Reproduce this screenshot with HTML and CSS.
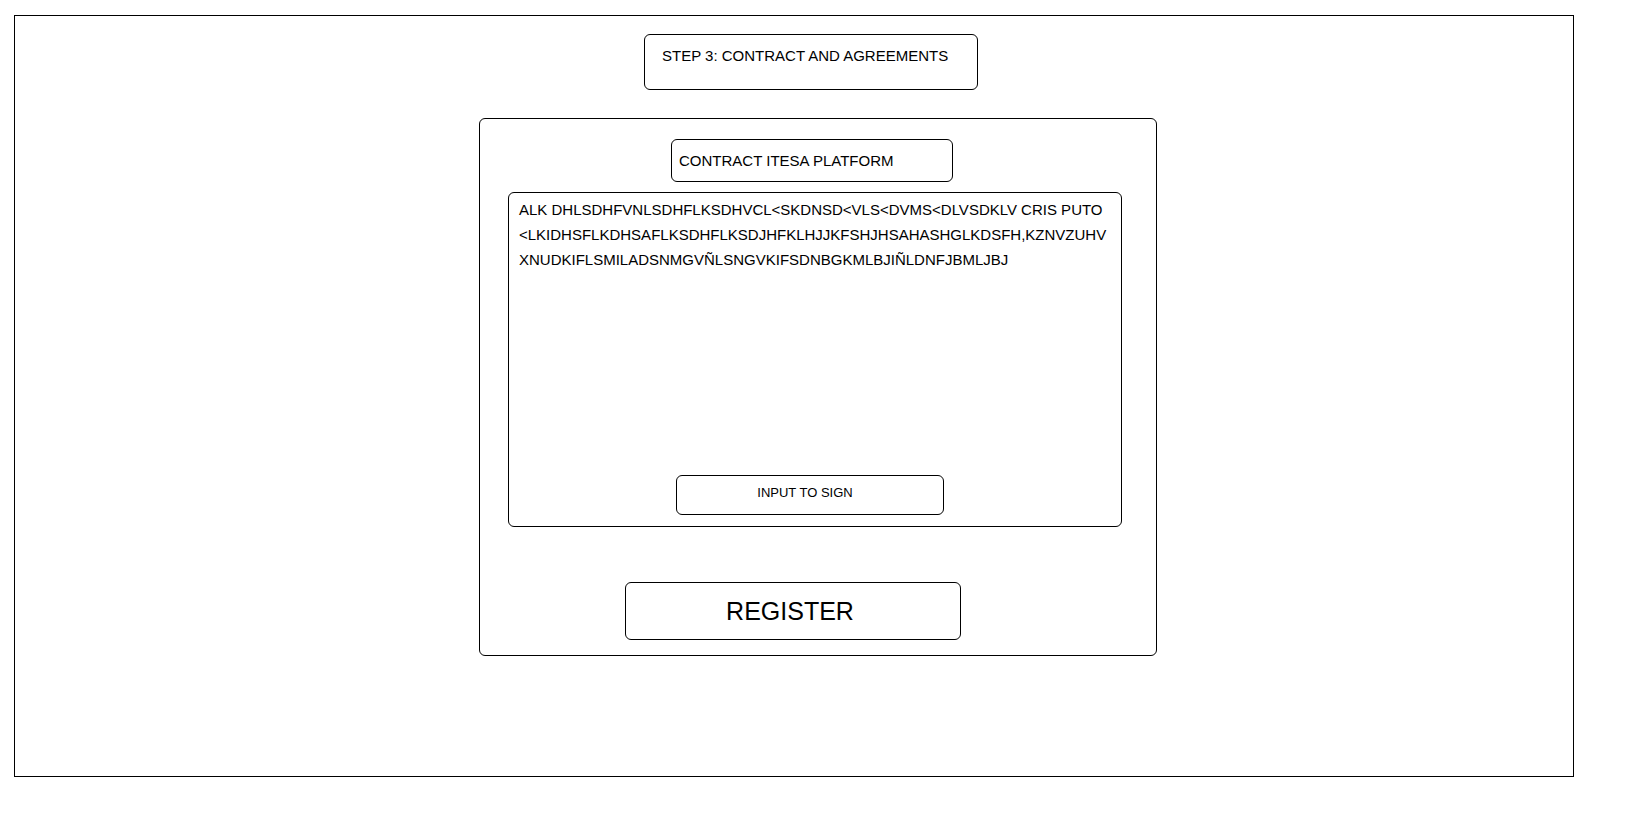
FILE: index.html
```html
<!DOCTYPE html>
<html lang="en">
<head>
<meta charset="utf-8">
<title>Step 3: Contract and Agreements</title>
<link rel="stylesheet" href="styles.css">
</head>
<body>
<div class="frame">
  <div class="step-title">STEP 3: CONTRACT AND AGREEMENTS</div>
  <div class="panel">
    <div class="contract-title">CONTRACT ITESA PLATFORM</div>
    <div class="contract-box">
      <div class="contract-text">ALK DHLSDHFVNLSDHFLKSDHVCL&lt;SKDNSD&lt;VLS&lt;DVMS&lt;DLVSDKLV CRIS PUTO<br>&lt;LKIDHSFLKDHSAFLKSDHFLKSDJHFKLHJJKFSHJHSAHASHGLKDSFH,KZNVZUHV<br>XNUDKIFLSMILADSNMGVÑLSNGVKIFSDNBGKMLBJIÑLDNFJBMLJBJ</div>
      <div class="sign-input">INPUT TO SIGN</div>
    </div>
    <div class="register">REGISTER</div>
  </div>
</div>
</body>
</html>
```

FILE: styles.css
```css
html, body {
  margin: 0;
  padding: 0;
  background: #ffffff;
}
body {
  font-family: "Liberation Sans", Arial, sans-serif;
  color: #000;
}
.frame {
  box-sizing: border-box;
  margin: 15px 0 0 14px;
  width: 1560px;
  height: 762px;
  border: 1px solid #000;
  display: flex;
  flex-direction: column;
  align-items: flex-start;
}
.step-title {
  box-sizing: border-box;
  margin: 18px 0 0 629px;
  width: 334px;
  height: 56px;
  border: 1px solid #000;
  border-radius: 6px;
  padding: 12px 0 0 17px;
  font-size: 15px;
  line-height: 18px;
}
.panel {
  box-sizing: border-box;
  margin: 28px 0 0 464px;
  width: 678px;
  height: 538px;
  border: 1px solid #000;
  border-radius: 6px;
  display: flex;
  flex-direction: column;
  align-items: flex-start;
}
.contract-title {
  box-sizing: border-box;
  margin: 20px 0 0 191px;
  width: 282px;
  height: 43px;
  border: 1px solid #000;
  border-radius: 6px;
  padding: 12px 0 0 7px;
  font-size: 15px;
  line-height: 18px;
}
.contract-box {
  box-sizing: border-box;
  margin: 10px 0 0 28px;
  width: 614px;
  height: 335px;
  border: 1px solid #000;
  border-radius: 6px;
  padding: 4px 10px 11px 10px;
  display: flex;
  flex-direction: column;
  align-items: flex-start;
}
.contract-text {
  font-size: 15px;
  line-height: 25px;
  white-space: nowrap;
}
.sign-input {
  box-sizing: border-box;
  margin: auto 0 0 157px;
  width: 268px;
  height: 40px;
  border: 1px solid #000;
  border-radius: 6px;
  display: flex;
  align-items: center;
  justify-content: center;
  padding: 0 10px 6px 0;
  font-size: 13px;
}
.register {
  box-sizing: border-box;
  margin: 55px 0 0 145px;
  width: 336px;
  height: 58px;
  border: 1px solid #000;
  border-radius: 6px;
  display: flex;
  align-items: center;
  justify-content: center;
  padding: 0 6px 0 0;
  font-size: 25px;
}
```
